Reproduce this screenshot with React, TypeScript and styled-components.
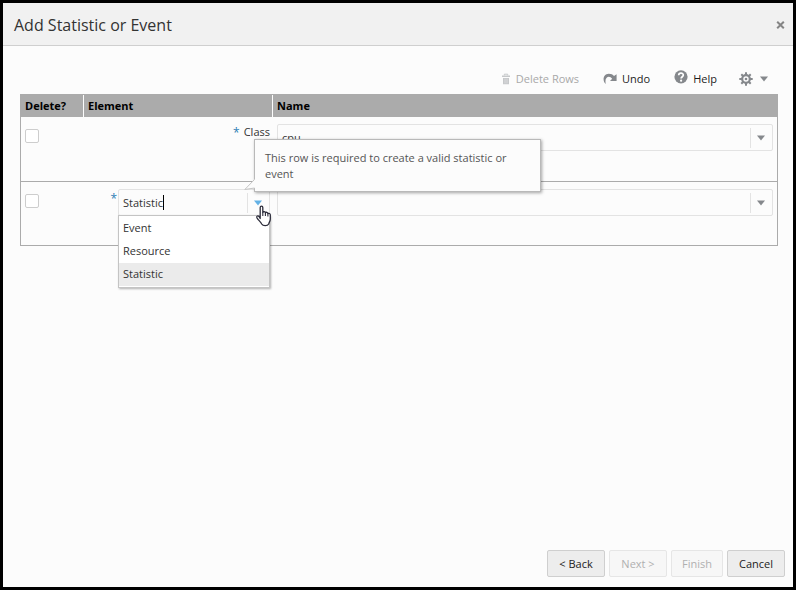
import React, { useState } from "react";
import styled, { createGlobalStyle, css } from "styled-components";

const GlobalStyle = createGlobalStyle`
  *, *::before, *::after { box-sizing: border-box; }
  html, body { margin: 0; padding: 0; }
  body, button, input {
    font-family: "Open Sans", "Segoe UI", "Noto Sans", sans-serif;
    font-size: 11px;
    line-height: 16px;
    color: #333;
  }
`;

const Dialog = styled.section`
  min-height: 100vh;
  display: flex;
  flex-direction: column;
  border: 3px solid #000;
  background: #fcfcfc;
`;

const Header = styled.header`
  display: flex;
  align-items: center;
  justify-content: space-between;
  height: 43px;
  padding: 1px 8px 0 11px;
  background: #f1f1f1;
  border-bottom: 1px solid #cfcfcf;
`;

const Title = styled.h1`
  margin: 0;
  font-size: 16px;
  line-height: 24px;
  font-weight: 400;
  color: #333;
`;

const CloseButton = styled.button`
  display: flex;
  padding: 0;
  border: 0;
  background: none;
  cursor: pointer;
`;

const Body = styled.main`
  flex: 1;
  padding: 22px 15px 0 17px;
`;

const Toolbar = styled.div`
  display: flex;
  justify-content: flex-end;
  align-items: center;
  gap: 24px;
  height: 26px;
  padding: 0 10px 4px 0;
`;

const ToolButton = styled.button`
  display: flex;
  align-items: center;
  gap: 5px;
  padding: 0;
  border: 0;
  background: none;
  color: #1c1c1c;
  cursor: pointer;
  &:disabled { color: #a9a9a9; cursor: default; }
`;

const MenuToolButton = styled(ToolButton)`
  gap: 7px;
  margin-left: -2px;
`;

const Grid = styled.table`
  width: 100%;
  table-layout: fixed;
  border-collapse: separate;
  border-spacing: 0;
  border: 1px solid #ababab;
  border-bottom: 0;
`;

const HeadCell = styled.th<{ $width?: number }>`
  ${(p) => p.$width && css`width: ${p.$width}px;`}
  height: 22px;
  padding: 0 4px;
  text-align: left;
  font-weight: 700;
  color: #000;
  background: #ababab;
  border-right: 1px solid #fcfcfc;
  &:last-child { border-right: 0; }
`;

const Cell = styled.td<{ $pad: string }>`
  height: 65px;
  padding: ${(p) => p.$pad};
  vertical-align: top;
  border-bottom: 1px solid #ababab;
  tr:last-child > & { height: 64px; }
`;

const Check = styled.input`
  display: block;
  appearance: none;
  width: 14px;
  height: 14px;
  margin: 0;
  border: 1px solid #cdcdcd;
  border-radius: 2px;
  background: #fff;
  &:checked { background: #5fa8d8; }
`;

const ElementLine = styled.div`
  position: relative;
  display: flex;
  justify-content: flex-end;
  gap: 1px;
`;

const Required = styled.span`
  font-size: 12px;
  line-height: 20px;
  color: #2f7fb5;
`;

const ElementName = styled.span`
  padding: 1px 0 0 3px;
`;

const Combo = styled.div<{ $width?: number }>`
  position: relative;
  width: ${(p) => (p.$width ? `${p.$width}px` : "100%")};
  height: 27px;
  display: flex;
  align-items: center;
  border: 1px solid #e3e3e3;
  border-radius: 2px;
  background: #fcfcfc;
`;

const ComboInput = styled.input<{ $fit?: boolean }>`
  ${(p) => (p.$fit ? css`field-sizing: content;` : css`flex: 1;`)}
  min-width: 0;
  height: 24px;
  padding: 0 0 0 4px;
  border: 0;
  outline: 0;
  background: none;
`;

const Caret = styled.span`
  width: 1px;
  height: 15px;
  background: #000;
`;

const ComboButton = styled.button`
  display: flex;
  align-items: center;
  justify-content: center;
  width: 22px;
  height: 20px;
  margin-left: auto;
  padding: 0 1px 0 0;
  border: 0;
  border-left: 1px solid #e3e3e3;
  background: none;
  cursor: pointer;
`;

const Menu = styled.ul`
  position: absolute;
  z-index: 2;
  top: 25px;
  left: -1px;
  right: -1px;
  margin: 0;
  padding: 1px 0;
  list-style: none;
  background: #fff;
  border: 1px solid #c4c4c4;
  box-shadow: 1px 1px 2px rgba(0, 0, 0, 0.3);
`;

const Option = styled.li`
  height: 23px;
  padding: 0 4px;
  line-height: 21px;
  cursor: pointer;
  &[aria-selected="true"] { background: #ebebeb; }
`;

const Tip = styled.div`
  position: absolute;
  z-index: 3;
  left: 167px;
  bottom: 24px;
  width: 287px;
  padding: 10px 20px 9px 10px;
  color: #555;
  background: #fcfcfc;
  border: 1px solid #b9b9b9;
  box-shadow: 1px 1px 3px rgba(0, 0, 0, 0.35);
`;

const TipTail = styled.svg`
  position: absolute;
  left: -11px;
  bottom: 0;
`;

const Pointer = styled.svg`
  position: absolute;
  z-index: 4;
  left: 136px;
  top: 15px;
  pointer-events: none;
`;

const Footer = styled.footer`
  display: flex;
  justify-content: flex-end;
  gap: 4px;
  padding: 0 8px 10px;
`;

const WizardButton = styled.button<{ $compact?: boolean }>`
  min-width: ${(p) => (p.$compact ? 52 : 58)}px;
  height: 27px;
  padding: 0 9px;
  border: 1px solid #cfcfcf;
  border-radius: 2px;
  background: #ededed;
  color: #1c1c1c;
  white-space: nowrap;
  cursor: pointer;
  &:disabled {
    color: #b0b0b0;
    background: #f7f7f7;
    border-color: #e6e6e6;
    cursor: default;
  }
`;

const Triangle = ({ color = "#85888c" }: { color?: string }) => (
  <svg width="8" height="6" viewBox="0 0 8 6" aria-hidden="true">
    <path d="M0 0.5H8L4 5.5Z" fill={color} />
  </svg>
);

const CloseIcon = () => (
  <svg width="9" height="8" viewBox="0 0 9 8" aria-hidden="true">
    <path d="M1.2 0.7L7.8 7.3M7.8 0.7L1.2 7.3" stroke="#858585" strokeWidth="2" />
  </svg>
);

const TrashIcon = () => (
  <svg width="10" height="12" viewBox="0 0 10 12" aria-hidden="true">
    <path d="M3.3 2.4V1.2H6.7V2.4" fill="none" stroke="#c6c8ca" strokeWidth="1" />
    <path d="M1 2.4H9V4H1ZM2 5H8V11.2H2Z" fill="#c6c8ca" />
    <path d="M4 5.6V10.4M6 5.6V10.4" stroke="#e9eaea" strokeWidth="0.6" />
  </svg>
);

const UndoIcon = () => (
  <svg width="14" height="12" viewBox="0 0 14 12" aria-hidden="true">
    <path d="M2.8 11C-0.8 8.4 -0.2 0.9 5.8 0.8C8.2 0.8 9.8 1.6 11 3L13.6 1.2V8H7L9.2 5.8C6.6 1.8 1 3.6 2.8 11Z" fill="#85888c" />
  </svg>
);

const HelpIcon = () => (
  <svg width="14" height="18" viewBox="0 0 14 18" aria-hidden="true">
    <circle cx="7" cy="6.8" r="6.6" fill="#85888c" />
    <path d="M4.7 5.3C4.7 2.4 9.3 2.4 9.3 5.1C9.3 6.7 7.1 6.8 7.1 8.6" fill="none" stroke="#fff" strokeWidth="1.7" />
    <circle cx="7.1" cy="10.7" r="1.1" fill="#fff" />
  </svg>
);

const GearIcon = () => (
  <svg width="14" height="14" viewBox="0 0 14 14" aria-hidden="true">
    <g stroke="#85888c" fill="none">
      <circle cx="7" cy="7" r="3.8" strokeWidth="2.2" />
      <path d="M7 0.3V3M7 11V13.7M0.3 7H3M11 7H13.7M2.3 2.3L4 4M10 10L11.7 11.7M2.3 11.7L4 10M10 4L11.7 2.3" strokeWidth="2" />
    </g>
    <circle cx="7" cy="7" r="1.3" fill="#85888c" />
  </svg>
);

const HandPointer = () => (
  <Pointer width="17" height="22" viewBox="0 0 17 22" aria-hidden="true">
    <path
      d="M5.2 13.5V2.6C5.2 0.5 7.8 0.5 7.8 2.6V7.5C8.2 6.2 10.3 6.4 10.4 7.8C11 6.9 12.8 7.2 12.9 8.6C13.7 8 15.3 8.5 15.3 10V14C15.3 16.5 14 17.2 13.7 19C12.5 21.2 8 21.2 6.7 19C6 17 3 15 1.9 12.7C1.2 11 3 10.2 4 11.5Z"
      fill="#fff"
      stroke="#2c2c3a"
      strokeWidth="1.3"
      strokeLinejoin="round"
    />
    <path d="M7.8 7.5V11M10.4 7.8V11M12.9 8.6V11.5" stroke="#2c2c3a" strokeWidth="1.1" />
  </Pointer>
);

const OPTIONS = ["Event", "Resource", "Statistic"];

function NameCombo({ label, initial }: { label: string; initial: string }) {
  const [value, setValue] = useState(initial);
  return (
    <Combo>
      <ComboInput
        role="combobox"
        aria-expanded={false}
        aria-label={label}
        value={value}
        onChange={(e) => setValue(e.target.value)}
      />
      <ComboButton type="button" aria-label={`Show choices for ${label}`}>
        <Triangle />
      </ComboButton>
    </Combo>
  );
}

function ElementCombo() {
  const [value, setValue] = useState("Statistic");
  const [open, setOpen] = useState(true);
  return (
    <Combo $width={152}>
      <ComboInput
        $fit
        role="combobox"
        aria-expanded={open}
        aria-controls="element-options"
        aria-describedby="row-tip"
        aria-label="Element"
        value={value}
        onChange={(e) => setValue(e.target.value)}
      />
      <Caret />
      <ComboButton type="button" aria-label="Show elements" onClick={() => setOpen(!open)}>
        <Triangle color="#63b1e5" />
      </ComboButton>
      {open && (
        <Menu id="element-options" role="listbox" aria-label="Elements">
          {OPTIONS.map((option) => (
            <Option
              key={option}
              role="option"
              aria-selected={option === value}
              onClick={() => {
                setValue(option);
                setOpen(false);
              }}
            >
              {option}
            </Option>
          ))}
        </Menu>
      )}
      <HandPointer />
    </Combo>
  );
}

export default function App() {
  return (
    <>
      <GlobalStyle />
      <Dialog aria-labelledby="dialog-title">
        <Header>
          <Title id="dialog-title">Add Statistic or Event</Title>
          <CloseButton type="button" aria-label="Close"><CloseIcon /></CloseButton>
        </Header>
        <Body>
          <Toolbar>
            <ToolButton type="button" disabled><TrashIcon />Delete Rows</ToolButton>
            <ToolButton type="button"><UndoIcon />Undo</ToolButton>
            <ToolButton type="button"><HelpIcon />Help</ToolButton>
            <MenuToolButton type="button" aria-label="Settings"><GearIcon /><Triangle /></MenuToolButton>
          </Toolbar>
          <Grid>
            <thead>
              <tr>
                <HeadCell $width={63}>Delete?</HeadCell>
                <HeadCell $width={189}>Element</HeadCell>
                <HeadCell>Name</HeadCell>
              </tr>
            </thead>
            <tbody>
              <tr>
                <Cell $pad="12px 4px 0"><Check type="checkbox" aria-label="Delete Class row" /></Cell>
                <Cell $pad="6px 3px 0">
                  <ElementLine>
                    <Required>*</Required>
                    <ElementName>Class</ElementName>
                  </ElementLine>
                </Cell>
                <Cell $pad="7px 4px 0"><NameCombo label="Class name" initial="cpu" /></Cell>
              </tr>
              <tr>
                <Cell $pad="12px 4px 0"><Check type="checkbox" aria-label="Delete Statistic row" /></Cell>
                <Cell $pad="7px 3px 0">
                  <ElementLine>
                    <Required>*</Required>
                    <ElementCombo />
                    <Tip id="row-tip" role="tooltip">
                      This row is required to create a valid statistic or event
                      <TipTail width="11" height="12" viewBox="0 0 11 12" aria-hidden="true">
                        <path d="M11 0L0.8 10.5L11 9Z" fill="#fcfcfc" />
                        <path d="M10.5 0.5L0.8 10.5L10.5 9" fill="none" stroke="#c4c4c4" />
                      </TipTail>
                    </Tip>
                  </ElementLine>
                </Cell>
                <Cell $pad="7px 4px 0"><NameCombo label="Statistic name" initial="" /></Cell>
              </tr>
            </tbody>
          </Grid>
        </Body>
        <Footer>
          <WizardButton type="button">&lt; Back</WizardButton>
          <WizardButton type="button" disabled>Next &gt;</WizardButton>
          <WizardButton type="button" disabled $compact>Finish</WizardButton>
          <WizardButton type="button">Cancel</WizardButton>
        </Footer>
      </Dialog>
    </>
  );
}
